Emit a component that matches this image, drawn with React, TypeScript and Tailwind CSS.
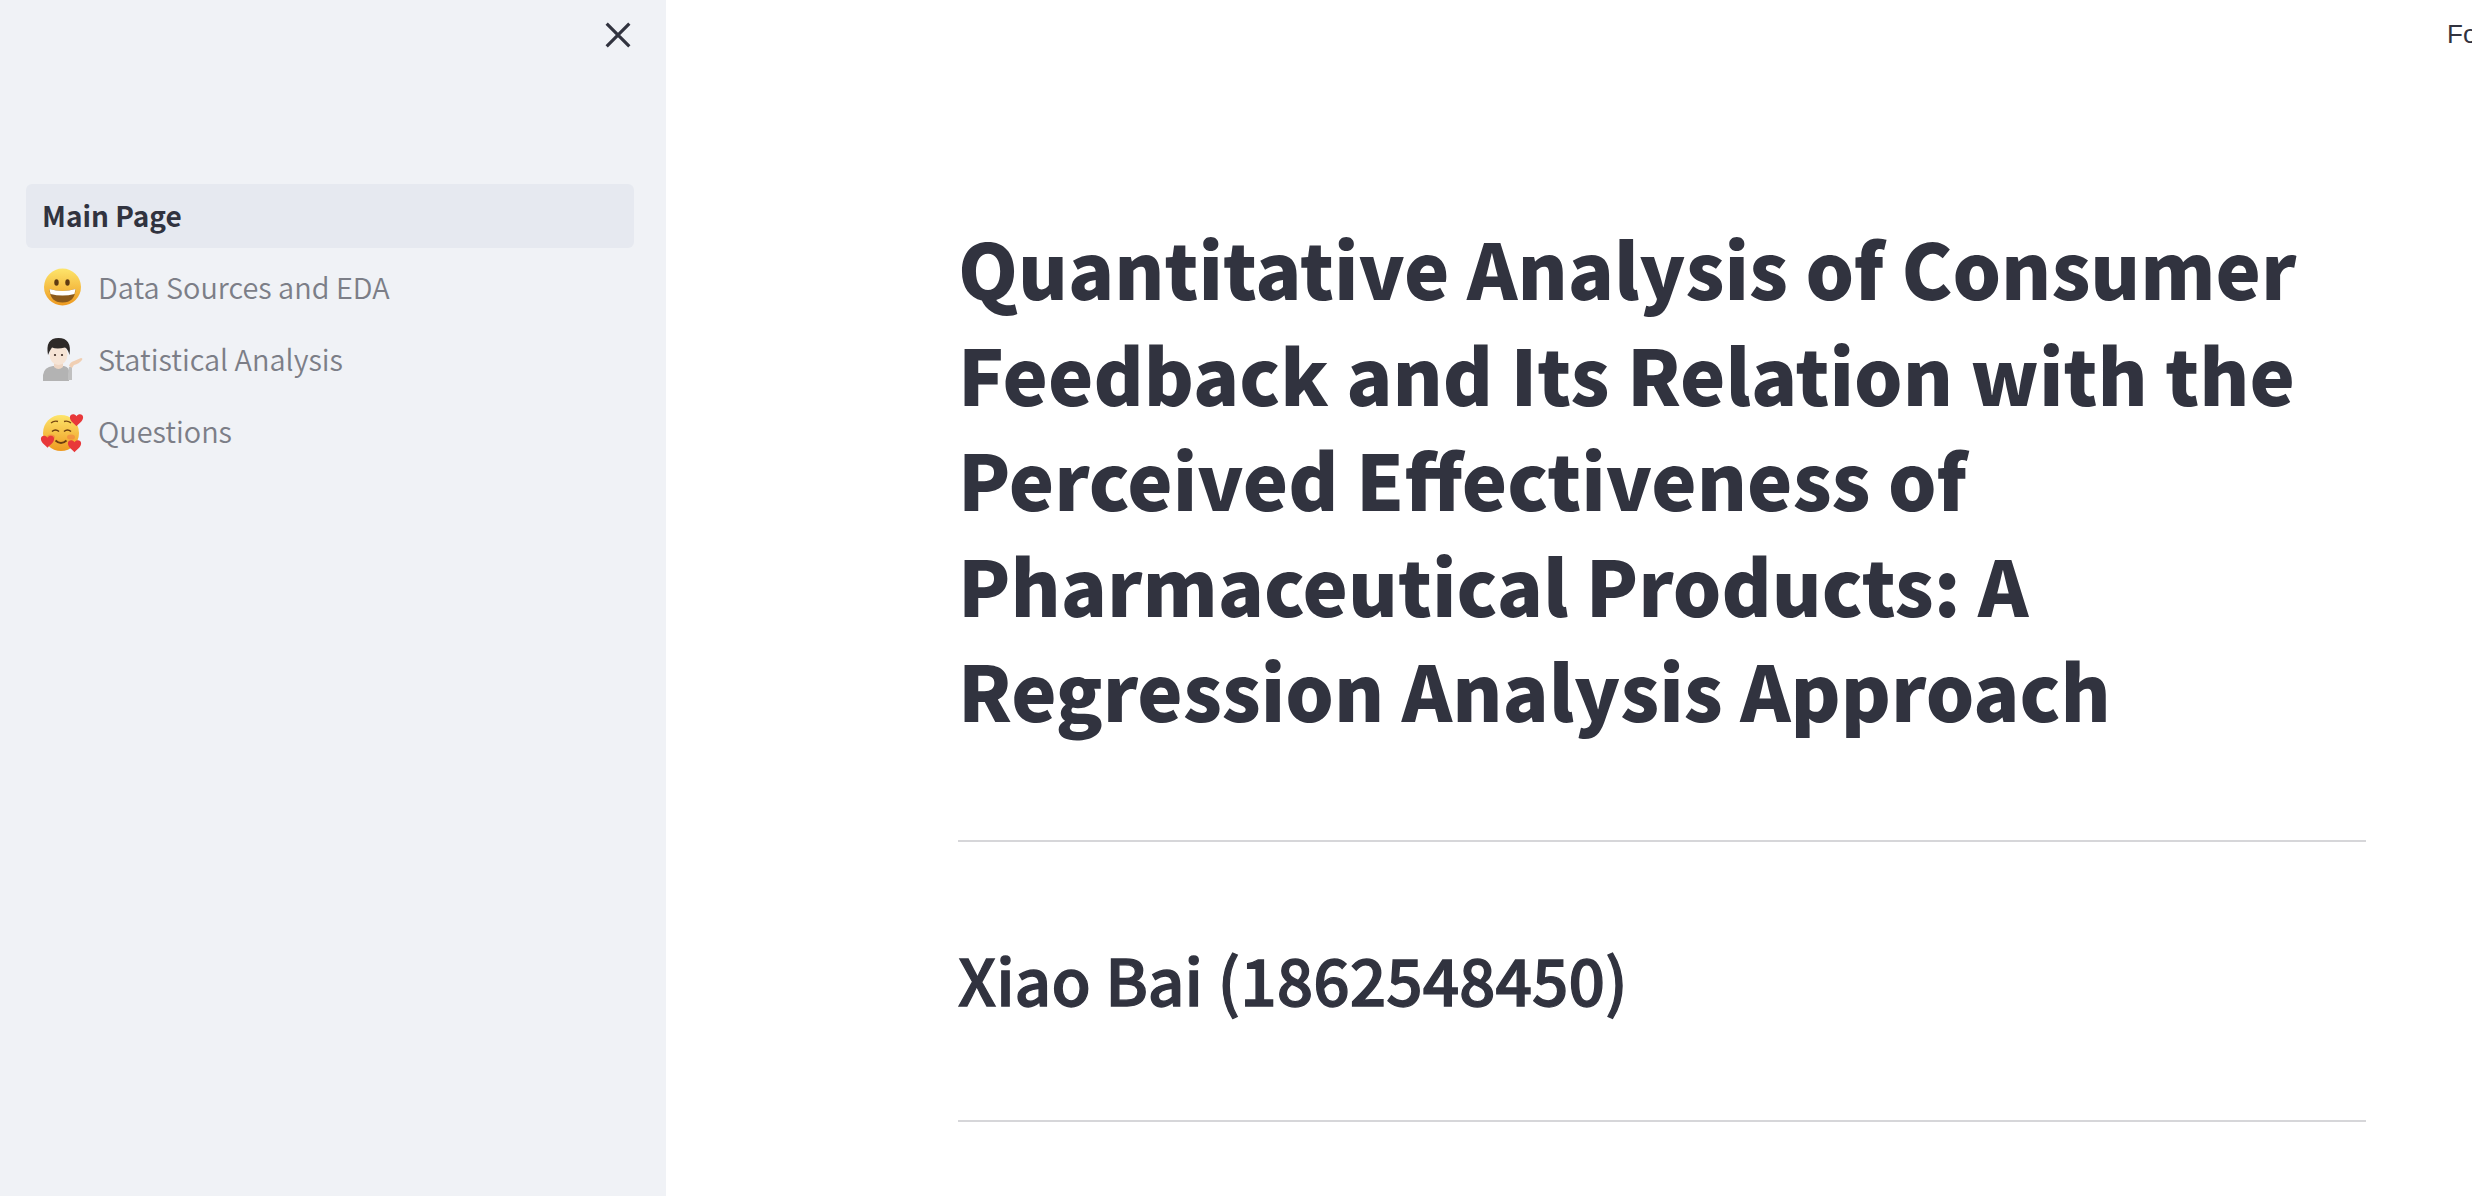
function Heart({ x, y, s = 1 }: { x: number; y: number; s?: number }) {
  return (
    <path
      transform={`translate(${x} ${y}) scale(${s})`}
      d="M0 6.5 C-2 4.5 -6 2 -6 -1.5 C-6 -4.5 -2 -5.5 0 -2.5 C2 -5.5 6 -4.5 6 -1.5 C6 2 2 4.5 0 6.5Z"
      fill="#e8383a"
    />
  );
}

function GrinEmoji() {
  return (
    <svg viewBox="0 0 52 52" className="h-[52px] w-[52px] shrink-0">
      <defs>
        <linearGradient id="grin" x1="0" y1="0" x2="0" y2="1">
          <stop offset="0" stopColor="#fde56b" />
          <stop offset="1" stopColor="#ee9a20" />
        </linearGradient>
      </defs>
      <circle cx="26.5" cy="25" r="18.5" fill="url(#grin)" />
      <ellipse cx="20.5" cy="20.5" rx="2.2" ry="3.2" fill="#5e3a12" />
      <ellipse cx="31.5" cy="20.5" rx="2.2" ry="3.2" fill="#5e3a12" />
      <path d="M13.5 27 Q26.5 31 39.5 27 Q39 40.5 26.5 40.5 Q14 40.5 13.5 27Z" fill="#8b5a1c" />
      <path d="M13.5 27 Q26.5 31 39.5 27 L38.5 32 Q26.5 35 14.5 32Z" fill="#ffffff" />
    </svg>
  );
}

function PersonEmoji() {
  return (
    <svg viewBox="0 0 52 52" className="h-[52px] w-[52px] shrink-0">
      <path d="M7 47 V41 Q8 33 17 32 H28 Q34 33 33 40 V47Z" fill="#b3b3b3" />
      <path d="M32 40 L33 33 L36 33 V46 H32Z" fill="#c0c0c0" />
      <path d="M18 28 H27 V33 Q22.5 37 18 33Z" fill="#eed6c4" />
      <ellipse cx="22.5" cy="20.5" rx="9" ry="10.5" fill="#f6e4d5" />
      <path d="M12 21 Q9 4 22.5 4 Q36 4 33.5 21 Q32 15 29 13.5 Q21 15.5 16 13.5 Q14 16 12 21Z" fill="#2e2a28" />
      <circle cx="19" cy="21" r="1.1" fill="#3a2a22" />
      <circle cx="26" cy="21" r="1.1" fill="#3a2a22" />
      <path d="M33 32 Q34 28 38 27 L45 24 Q47 24 46 26 Q43 30 38 31 L36 34Z" fill="#f0cfb3" />
    </svg>
  );
}

function HeartsEmoji() {
  return (
    <svg viewBox="0 0 52 52" className="h-[52px] w-[52px] shrink-0">
      <defs>
        <linearGradient id="hearts" x1="0" y1="0" x2="0" y2="1">
          <stop offset="0" stopColor="#fde56b" />
          <stop offset="1" stopColor="#ee9a20" />
        </linearGradient>
      </defs>
      <circle cx="25" cy="27" r="18" fill="url(#hearts)" />
      <ellipse cx="15" cy="31" rx="4" ry="2.6" fill="#f0793f" opacity="0.55" />
      <ellipse cx="35" cy="31" rx="4" ry="2.6" fill="#f0793f" opacity="0.55" />
      <path d="M15 17 Q18 14.5 22 15.5 M28 15.5 Q32 14.5 35 17" stroke="#7a4a14" strokeWidth="1.3" fill="none" />
      <path d="M16 25.5 Q19.5 22.5 23 25.5 M28 25.5 Q31.5 22.5 35 25.5" stroke="#6b3d10" strokeWidth="1.6" fill="none" />
      <path d="M19.5 34.5 Q25 39.5 30.5 34.5" stroke="#6b3d10" strokeWidth="1.8" fill="none" />
      <Heart x={40.5} y={13} s={1.1} />
      <Heart x={11.5} y={34.5} s={1.1} />
      <Heart x={38.5} y={39} s={1.1} />
    </svg>
  );
}

const navItems = [
  { label: "Data Sources and EDA", icon: <GrinEmoji /> },
  { label: "Statistical Analysis", icon: <PersonEmoji /> },
  { label: "Questions", icon: <HeartsEmoji /> },
];

export default function App() {
  return (
    <div className="relative flex h-[1196px] w-full overflow-hidden bg-white font-['Noto_Sans_CJK_SC','Noto_Sans',sans-serif] text-[#31333f]">
      <aside className="flex w-[666px] shrink-0 flex-col bg-[#f0f2f6] pt-[184px] pl-[26px] pr-[32px]">
        <button className="absolute left-[602px] top-[19px] text-[#31333f]">
          <svg viewBox="0 0 24 24" className="h-[32px] w-[32px]" fill="none" stroke="currentColor" strokeWidth="2.4">
            <path d="M3.5 3.5 L20.5 20.5 M20.5 3.5 L3.5 20.5" />
          </svg>
        </button>
        <nav className="flex flex-col gap-[8px]">
          <a className="flex h-[64px] items-center rounded-[6px] bg-[#e6e9f0] px-[16px] pb-[3px] text-[28px] font-semibold">Main Page</a>
          {navItems.map((item) => (
            <a key={item.label} className="flex h-[64px] items-center gap-[16px] px-[16px] text-[28.9px] font-[350] text-[#7c7e87]">
              <span className="flex w-[40px] justify-center">{item.icon}</span>
              <span className="pb-[2px]">{item.label}</span>
            </a>
          ))}
        </nav>
      </aside>
      <main className="flex min-w-0 flex-1 flex-col pl-[292px] pr-[106px] pt-[214px]">
        <h1 className="text-[76.4px] font-black leading-[105.6px]">
          Quantitative Analysis of Consumer Feedback and Its Relation with the Perceived Effectiveness of Pharmaceutical Products: A Regression Analysis Approach
        </h1>
        <hr className="mt-[98px] border-0 border-t-2 border-[#d6d6d9]" />
        <h2 className="mt-[88px] text-[64px] font-medium leading-[96px] [-webkit-text-stroke:1.3px_#31333f]">Xiao Bai (1862548450)</h2>
        <hr className="mt-[94px] border-0 border-t-2 border-[#d6d6d9]" />
      </main>
      <div className="absolute left-[2447px] top-[16px] w-[25px] overflow-hidden whitespace-nowrap font-['Liberation_Sans',sans-serif] text-[26px] leading-[36px] text-[#31333f]">
        Fork
      </div>
    </div>
  );
}
